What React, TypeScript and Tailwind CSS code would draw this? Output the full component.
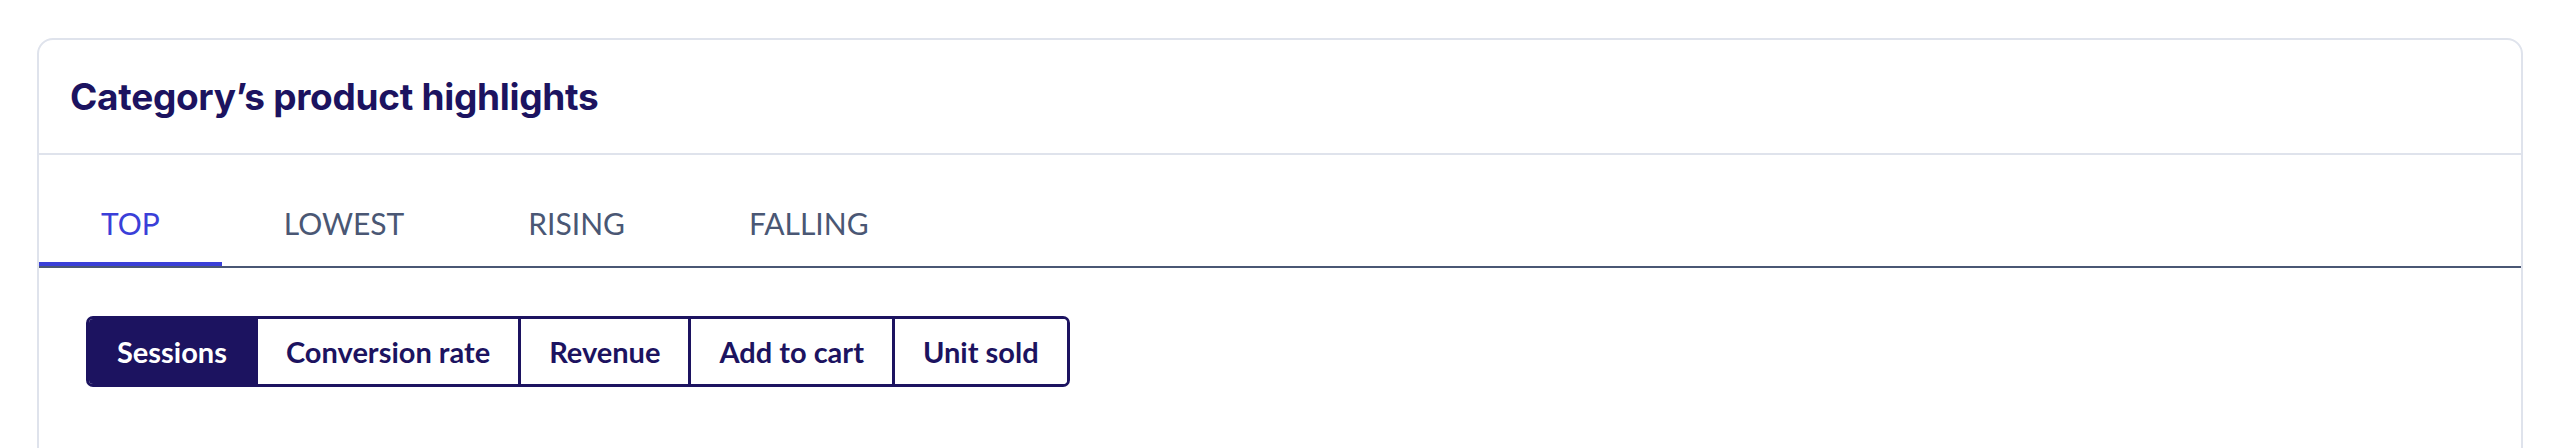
import { useState } from "react";

const TABS = ["TOP", "LOWEST", "RISING", "FALLING"];
const METRICS = ["Sessions", "Conversion rate", "Revenue", "Add to cart", "Unit sold"];

export default function App() {
  const [tab, setTab] = useState("TOP");
  const [metric, setMetric] = useState("Sessions");

  return (
    <div className="min-h-screen bg-white pt-[38px] pl-[37px] font-['Lato',sans-serif]">
      <div className="w-[2486px] h-[460px] rounded-[16px] border-2 border-[#dfe3ec] bg-white">
        {/* Header */}
        <div className="h-[115px] flex items-center px-[31px] border-b-2 border-[#dfe3ec]">
          <h2 className="text-[37px] font-bold text-[#1c1360] font-['Inter',sans-serif] tracking-[-0.3px]">
            Category’s product highlights
          </h2>
        </div>

        {/* Tabs */}
        <div className="flex border-b-2 border-[#4a5774]">
          {TABS.map((t) => (
            <button
              key={t}
              onClick={() => setTab(t)}
              className={`h-[111px] pt-[29px] px-[62px] text-[30px] border-b-4 ${
                tab === t ? "border-[#3a3fd8] text-[#3a3fd8]" : "border-transparent text-[#4a5774]"
              }`}
            >
              {t}
            </button>
          ))}
        </div>

        {/* Metric toggle */}
        <div className="pt-[48px] pl-[47px]">
          <div className="inline-flex border-[3px] border-[#1c1360] rounded-[7px] overflow-hidden">
            {METRICS.map((m, i) => (
              <button
                key={m}
                onClick={() => setMetric(m)}
                className={`h-[65px] px-[28px] text-[29px] font-bold ${
                  i < METRICS.length - 1 ? "border-r-[3px] border-[#1c1360]" : ""
                } ${metric === m ? "bg-[#1c1360] text-white" : "bg-white text-[#1c1360]"}`}
              >
                {m}
              </button>
            ))}
          </div>
        </div>
      </div>
    </div>
  );
}
